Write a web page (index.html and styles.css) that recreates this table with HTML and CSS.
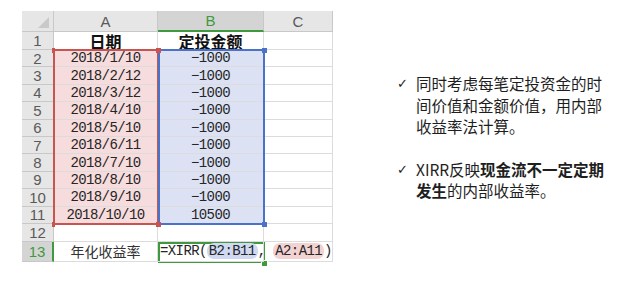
FILE: index.html
```html
<!DOCTYPE html>
<html lang="zh">
<head>
<meta charset="utf-8">
<link rel="stylesheet" href="styles.css">
</head>
<body>
<div class="page">
  <div class="sheet">
    <div class="grid">
      <div class="corner"><span class="tri"></span></div>
      <div class="colh">A</div>
      <div class="colh colh-sel">B</div>
      <div class="colh">C</div>

      <div class="rowh">1</div><div class="cell head">日期</div><div class="cell head">定投金额</div><div class="cell"></div>
      <div class="rowh">2</div><div class="cell mono pink">2018/1/10</div><div class="cell mono blue">−1000</div><div class="cell"></div>
      <div class="rowh">3</div><div class="cell mono pink">2018/2/12</div><div class="cell mono blue">−1000</div><div class="cell"></div>
      <div class="rowh">4</div><div class="cell mono pink">2018/3/12</div><div class="cell mono blue">−1000</div><div class="cell"></div>
      <div class="rowh">5</div><div class="cell mono pink">2018/4/10</div><div class="cell mono blue">−1000</div><div class="cell"></div>
      <div class="rowh">6</div><div class="cell mono pink">2018/5/10</div><div class="cell mono blue">−1000</div><div class="cell"></div>
      <div class="rowh">7</div><div class="cell mono pink">2018/6/11</div><div class="cell mono blue">−1000</div><div class="cell"></div>
      <div class="rowh">8</div><div class="cell mono pink">2018/7/10</div><div class="cell mono blue">−1000</div><div class="cell"></div>
      <div class="rowh">9</div><div class="cell mono pink">2018/8/10</div><div class="cell mono blue">−1000</div><div class="cell"></div>
      <div class="rowh">10</div><div class="cell mono pink">2018/9/10</div><div class="cell mono blue">−1000</div><div class="cell"></div>
      <div class="rowh">11</div><div class="cell mono pink">2018/10/10</div><div class="cell mono blue">10500</div><div class="cell"></div>
      <div class="rowh">12</div><div class="cell"></div><div class="cell"></div><div class="cell"></div>
      <div class="rowh rowh-sel">13</div><div class="cell label">年化收益率</div><div class="cell formula mono">=XIRR(<span class="ref ref-b">B2:B11</span>,&nbsp;<span class="ref ref-a">A2:A11</span>)</div><div class="cell"></div>
    </div>
    <div class="sel sel-a"></div>
    <div class="sel sel-b"></div>
    <div class="sel sel-active"></div>
    <span class="hd hd-a1"></span>
    <span class="hd hd-a2"></span>
    <span class="hd hd-a3"></span>
    <span class="hd hd-a4"></span>
    <span class="hd hd-b1"></span>
    <span class="hd hd-b2"></span>
    <span class="hd hd-g"></span>
  </div>

  <div class="notes">
    <div class="note">
      <span class="check">✓</span>
      <p>同时考虑每笔定投资金的时间价值和金额价值，用内部收益率法计算。</p>
    </div>
    <div class="note">
      <span class="check">✓</span>
      <p>XIRR反映<b>现金流不一定定期发生</b>的内部收益率。</p>
    </div>
  </div>
</div>
</body>
</html>
```

FILE: styles.css
```css
html, body {
  margin: 0;
  padding: 0;
  background: #ffffff;
}

.page {
  width: 640px;
  height: 281px;
  display: flex;
  align-items: flex-start;
}

.sheet {
  position: relative;
  margin-left: 22px;
  margin-top: 11px;
}

.grid {
  display: grid;
  grid-template-columns: 32px 104px 106px 69px;
  grid-template-rows: 21px 18px repeat(10, 17.4px) 18px 20px;
  font-family: "Liberation Sans", Arial, sans-serif;
}

.grid > div {
  box-sizing: border-box;
  border-right: 1px solid #dcdcdc;
  border-bottom: 1px solid #dcdcdc;
  display: flex;
  align-items: center;
  justify-content: center;
  white-space: nowrap;
}

.corner {
  background: #e6e6e6;
  position: relative;
  border-right-color: #c8c8c8 !important;
  border-bottom-color: #c8c8c8 !important;
}

.tri {
  position: absolute;
  right: 4px;
  bottom: 3px;
  width: 0;
  height: 0;
  border-left: 11px solid transparent;
  border-bottom: 11px solid #c9c9c9;
}

.colh {
  background: #e6e6e6;
  color: #5a5a5a;
  font-size: 15px;
  border-right-color: #c8c8c8 !important;
  border-bottom-color: #c8c8c8 !important;
}

.colh-sel {
  background: #d4d4d4;
  color: #3f9a3f;
  border-bottom: 2px solid #3f9a3f !important;
}

.rowh {
  background: #e6e6e6;
  color: #5a5a5a;
  font-size: 15px;
  border-right-color: #c8c8c8 !important;
  border-bottom-color: #c8c8c8 !important;
}

.rowh-sel {
  background: #d4d4d4;
  color: #3f9a3f;
  border-right: 2px solid #3f9a3f !important;
}

.cell {
  color: #222222;
}

.head {
  font-family: "Noto Sans CJK SC", sans-serif;
  font-weight: 700;
  font-size: 16px;
  color: #111111;
}

.mono {
  font-family: "Liberation Mono", "DejaVu Sans Mono", monospace;
  font-size: 14px;
  letter-spacing: -0.6px;
  color: #262626;
}

.pink {
  background: #f6dcdc;
}

.blue {
  background: #dce2f4;
}

.label {
  font-family: "Noto Sans CJK SC", sans-serif;
  font-size: 14px;
  color: #333333;
}

.formula {
  justify-content: flex-start !important;
  padding-left: 2px;
  overflow: visible;
  position: relative;
  z-index: 2;
}

.ref {
  border-radius: 7px;
  padding: 0 2px;
  line-height: 16px;
}

.ref-b {
  background: #cfd9f2;
}

.ref-a {
  background: #f3d2d2;
}

.sel {
  position: absolute;
  box-sizing: border-box;
  pointer-events: none;
}

.sel-a {
  left: 31px;
  top: 38px;
  width: 106px;
  height: 176px;
  border: 2px solid #c9534f;
}

.sel-b {
  left: 136px;
  top: 38px;
  width: 107px;
  height: 176px;
  border: 2px solid #4a72c8;
}

.sel-active {
  left: 136px;
  top: 231px;
  width: 107px;
  height: 21px;
  border: 2px solid #3f9a3f;
}

.hd {
  position: absolute;
  width: 5px;
  height: 5px;
}

.hd-a1 { left: 134px; top: 37px; background: #c9534f; }
.hd-a2 { left: 134px; top: 211px; background: #c9534f; }
.hd-a3 { left: 30px; top: 37px; width: 3px; background: #c9534f; }
.hd-a4 { left: 30px; top: 211px; width: 3px; background: #c9534f; }
.hd-b1 { left: 240px; top: 37px; background: #4a72c8; }
.hd-b2 { left: 240px; top: 211px; background: #4a72c8; }
.hd-g { left: 239px; top: 249px; background: #3f9a3f; border: 1px solid #fff; }

.notes {
  margin-left: 64px;
  margin-top: 73px;
  width: 212px;
  font-family: "Noto Sans CJK SC", sans-serif;
  font-size: 15.5px;
  line-height: 21.5px;
  color: #1e1e1e;
}

.note {
  display: flex;
  margin-bottom: 21px;
}

.check {
  width: 19px;
  flex: none;
  font-size: 13px;
  font-family: "DejaVu Sans", sans-serif;
}

.note p {
  margin: 0;
  width: 192px;
}

.note b {
  font-weight: 700;
}
```
